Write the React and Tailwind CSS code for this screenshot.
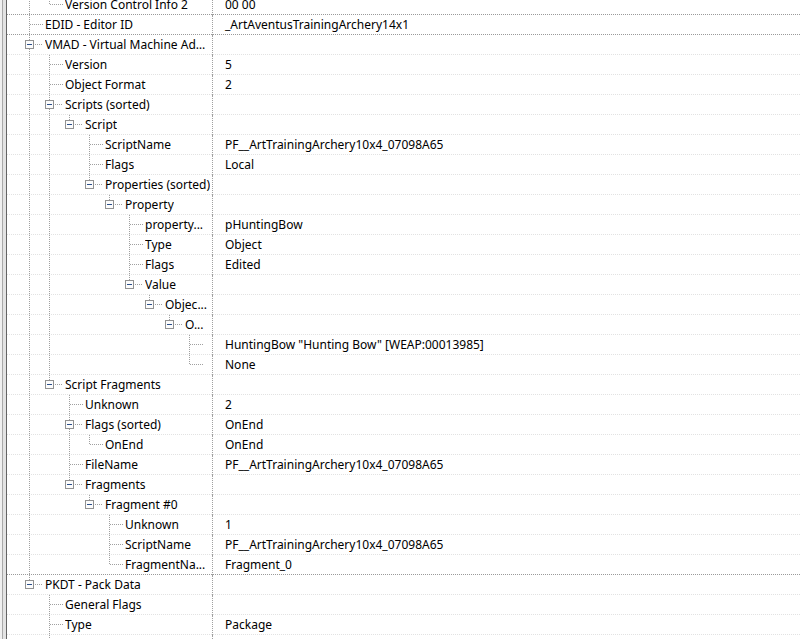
import React from "react";

// record tree, flattened into rows below
const tree = [
  {
    n: "Record Header",
    c: [
      { n: "Signature", v: "PACK" },
      { n: "Data Size", v: "1024" },
      { n: "Record Flags", v: "" },
      { n: "FormID", v: "" },
      { n: "Version Control Info 1", v: "" },
      { n: "Form Version", v: "44" },
      { n: "Version Control Info 2", v: "00 00" },
    ],
  },
  { n: "EDID - Editor ID", v: "_ArtAventusTrainingArchery14x1" },
  {
    n: "VMAD - Virtual Machine Ada...",
    c: [
      { n: "Version", v: "5" },
      { n: "Object Format", v: "2" },
      {
        n: "Scripts (sorted)",
        c: [
          {
            n: "Script",
            c: [
              { n: "ScriptName", v: "PF__ArtTrainingArchery10x4_07098A65" },
              { n: "Flags", v: "Local" },
              {
                n: "Properties (sorted)",
                c: [
                  {
                    n: "Property",
                    c: [
                      { n: "property...", v: "pHuntingBow" },
                      { n: "Type", v: "Object" },
                      { n: "Flags", v: "Edited" },
                      {
                        n: "Value",
                        c: [
                          {
                            n: "Objec...",
                            c: [
                              {
                                n: "O...",
                                c: [
                                  { n: "", v: 'HuntingBow "Hunting Bow" [WEAP:00013985]' },
                                  { n: "", v: "None" },
                                ],
                              },
                            ],
                          },
                        ],
                      },
                    ],
                  },
                ],
              },
            ],
          },
        ],
      },
      {
        n: "Script Fragments",
        c: [
          { n: "Unknown", v: "2" },
          { n: "Flags (sorted)", v: "OnEnd", c: [{ n: "OnEnd", v: "OnEnd" }] },
          { n: "FileName", v: "PF__ArtTrainingArchery10x4_07098A65" },
          {
            n: "Fragments",
            c: [
              {
                n: "Fragment #0",
                c: [
                  { n: "Unknown", v: "1" },
                  { n: "ScriptName", v: "PF__ArtTrainingArchery10x4_07098A65" },
                  { n: "FragmentNa...", v: "Fragment_0" },
                ],
              },
            ],
          },
        ],
      },
    ],
  },
  {
    n: "PKDT - Pack Data",
    c: [
      { n: "General Flags", v: "" },
      { n: "Type", v: "Package" },
      { n: "Interrupt Override", v: "None" },
      { n: "Preferred Speed", v: "Walk" },
    ],
  },
];

const flatten = (nodes, level, cont, out) => {
  nodes.forEach((nd, i) => {
    const hasNext = i < nodes.length - 1;
    out.push({ ...nd, level, cont, hasNext });
    if (nd.c) flatten(nd.c, level + 1, [...cont, hasNext], out);
  });
  return out;
};

const all = flatten(tree, 0, [], []);
const rows = all.slice(all.findIndex((r) => r.n === "Version Control Info 2"));

const LINE = "#a0a0a0";

function Gutter({ row }) {
  const textX = 45 + 20 * row.level;
  const w = Math.min(textX - 7, 205);
  const cx = 29 + 20 * row.level;
  const box = !!row.c;
  const dot = { stroke: LINE, strokeWidth: 1, strokeDasharray: "1 1", shapeRendering: "crispEdges" };
  return (
    <svg width={w} height="20" viewBox={`7 0 ${w} 20`} className="shrink-0 self-start">
      {row.cont.map((on, k) =>
        on ? <line key={k} x1={29 + 20 * k + 0.5} y1="0" x2={29 + 20 * k + 0.5} y2="20" style={dot} /> : null
      )}
      <line x1={cx + 0.5} y1="0" x2={cx + 0.5} y2={box ? 5 : 9} style={dot} />
      {row.hasNext && <line x1={cx + 0.5} y1={box ? 14 : 10} x2={cx + 0.5} y2="20" style={dot} />}
      <line x1={box ? cx + 6 : cx + 1} y1="9.5" x2={textX - 2} y2="9.5" style={dot} />
      {box && (
        <g shapeRendering="crispEdges">
          <rect x={cx - 4 + 0.5} y="5.5" width="8" height="8" fill="#fcfcfc" stroke="#919191" />
          <rect x={cx - 2} y="9" width="5" height="1" fill="#2b4f8a" />
        </g>
      )}
    </svg>
  );
}

export default function App() {
  return (
    <div
      className="flex h-[639px] w-[800px] overflow-hidden bg-white text-[12px] text-[#000]"
      style={{ fontFamily: '"Noto Sans", "Open Sans", sans-serif' }}
    >
      <div className="flex shrink-0">
        <div className="w-[2px] bg-[#f0f0f0]" />
        <div className="w-[1px] bg-[#a9a9a9]" />
        <div className="w-[3px] bg-[#e3e3e3]" />
        <div className="w-[1px] bg-[#646464]" />
      </div>
      <div className="-mt-[5px] flex flex-1 flex-col">
        {rows.map((row, i) => {
          const next = rows[i + 1];
          const dark = next && next.level === 0;
          return (
            <div
              key={i}
              className={`flex h-[20px] shrink-0 border-b border-dotted ${dark ? "border-[#9a9a9a]" : "border-[#e2e2e2]"}`}
            >
              <div className="flex h-[19px] w-[205px] shrink-0 items-center">
                <Gutter row={row} />
                <span className="truncate whitespace-nowrap leading-[19px]">{row.n}</span>
              </div>
              <div className="h-[20px] w-0 shrink-0 border-l border-dotted border-[#a0a0a0]" />
              <div className="flex h-[19px] flex-1 items-center pl-[12px]">
                <span className="whitespace-nowrap leading-[19px]">{row.v}</span>
              </div>
            </div>
          );
        })}
      </div>
    </div>
  );
}
